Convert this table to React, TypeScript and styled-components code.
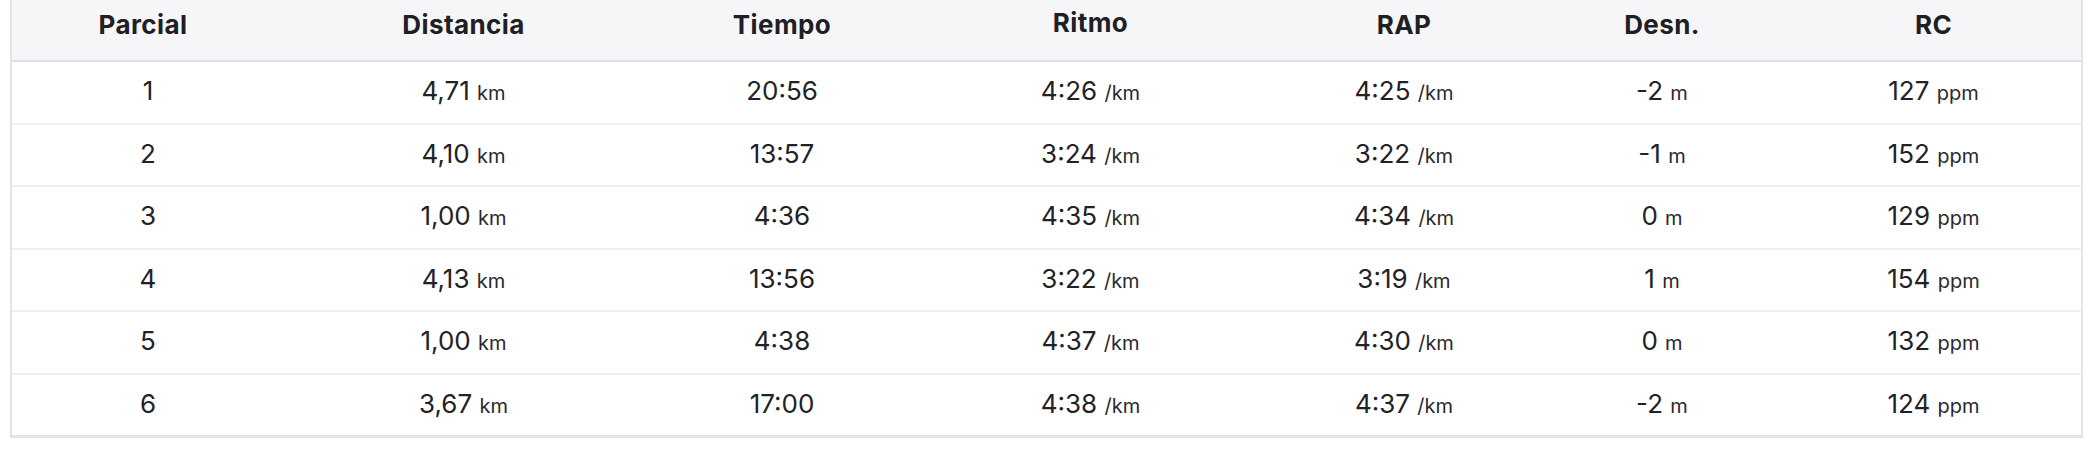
import React from 'react';
import styled, { createGlobalStyle } from 'styled-components';

const GlobalStyle = createGlobalStyle`
  body {
    margin: 0;
    background: #ffffff;
    font-family: Inter, 'Noto Sans', sans-serif;
    color: #222226;
  }
`;

const columns = '262px 379px 258px 359px 268px 248px 295px';

const Page = styled.div`
  padding-left: 10px;
  width: 2073px;
`;

const Table = styled.div`
  border: 2px solid #e3e3ea;
  border-top: none;
  border-bottom-width: 3px;
`;

const HeaderRow = styled.div`
  display: grid;
  grid-template-columns: ${columns};
  height: 60px;
  background: #f6f6f9;
  border-bottom: 2px solid #dedee6;
`;

const HeaderCell = styled.div<{ $raised?: boolean }>`
  text-align: center;
  padding-top: ${(p) => (p.$raised ? '7px' : '9px')};
  font-size: 26px;
  line-height: 32px;
  font-weight: 700;
  letter-spacing: 0.4px;
  color: #202024;
`;

const Row = styled.div`
  display: grid;
  grid-template-columns: ${columns};
  height: 60.5px;
  background: #ffffff;

  & + & {
    border-top: 2px solid #efeff3;
  }
`;

const Cell = styled.div<{ $lead?: boolean }>`
  text-align: center;
  padding-left: ${(p) => (p.$lead ? '10px' : '0')};
  font-size: 26px;
  line-height: 57px;
  color: #222226;
  white-space: pre;
`;

const Unit = styled.span`
  font-size: 20px;
  color: #2a2a2e;
`;

type Split = {
  n: number;
  dist: string;
  time: string;
  pace: string;
  gap: string;
  elev: string;
  hr: string;
};

const headers = ['Parcial', 'Distancia', 'Tiempo', 'Ritmo', 'RAP', 'Desn.', 'RC'];

const splits: Split[] = [
  { n: 1, dist: '4,71', time: '20:56', pace: '4:26', gap: '4:25', elev: '-2', hr: '127' },
  { n: 2, dist: '4,10', time: '13:57', pace: '3:24', gap: '3:22', elev: '-1', hr: '152' },
  { n: 3, dist: '1,00', time: '4:36', pace: '4:35', gap: '4:34', elev: '0', hr: '129' },
  { n: 4, dist: '4,13', time: '13:56', pace: '3:22', gap: '3:19', elev: '1', hr: '154' },
  { n: 5, dist: '1,00', time: '4:38', pace: '4:37', gap: '4:30', elev: '0', hr: '132' },
  { n: 6, dist: '3,67', time: '17:00', pace: '4:38', gap: '4:37', elev: '-2', hr: '124' },
];

const Value = ({ v, unit }: { v: string; unit: string }) => (
  <Cell>
    {v} <Unit>{unit}</Unit>
  </Cell>
);

export default function App() {
  return (
    <Page>
      <GlobalStyle />
      <Table>
        <HeaderRow>
          {headers.map((h) => (
            <HeaderCell key={h} $raised={h === 'Ritmo'}>
              {h}
            </HeaderCell>
          ))}
        </HeaderRow>
        {splits.map((s) => (
          <Row key={s.n}>
            <Cell $lead>{s.n}</Cell>
            <Value v={s.dist} unit="km" />
            <Cell>{s.time}</Cell>
            <Value v={s.pace} unit="/km" />
            <Value v={s.gap} unit="/km" />
            <Value v={s.elev} unit="m" />
            <Value v={s.hr} unit="ppm" />
          </Row>
        ))}
      </Table>
    </Page>
  );
}
